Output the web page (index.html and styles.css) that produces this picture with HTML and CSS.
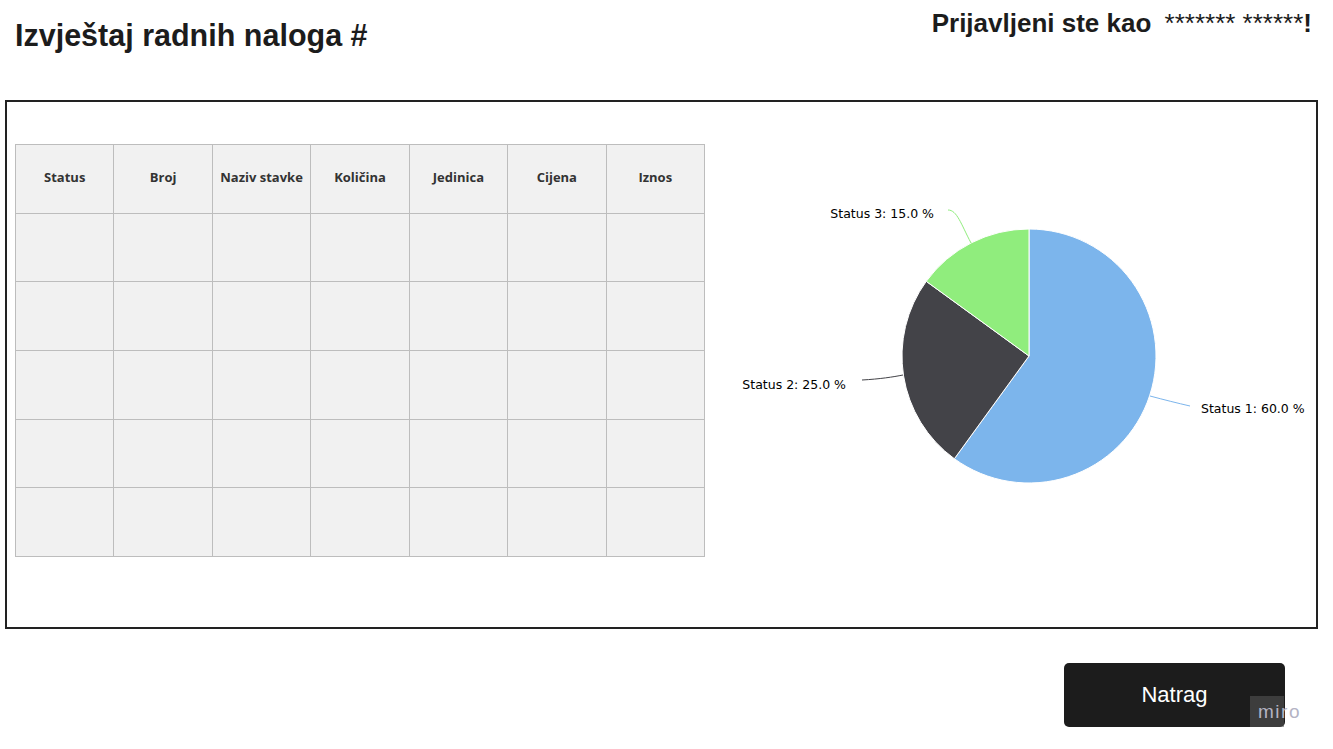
FILE: index.html
```html
<!DOCTYPE html>
<html lang="hr">
<head>
<meta charset="utf-8">
<title>Izvještaj radnih naloga</title>
<link rel="stylesheet" href="styles.css">
</head>
<body>
<header class="top">
  <h1 class="title">Izvještaj radnih naloga #</h1>
  <div class="user">Prijavljeni ste kao <span class="stars">******* ******</span>!</div>
</header>
<main class="panel">
  <table class="grid">
    <thead>
      <tr><th>Status</th><th>Broj</th><th>Naziv stavke</th><th>Količina</th><th>Jedinica</th><th>Cijena</th><th>Iznos</th></tr>
    </thead>
    <tbody>
      <tr><td></td><td></td><td></td><td></td><td></td><td></td><td></td></tr>
      <tr><td></td><td></td><td></td><td></td><td></td><td></td><td></td></tr>
      <tr><td></td><td></td><td></td><td></td><td></td><td></td><td></td></tr>
      <tr><td></td><td></td><td></td><td></td><td></td><td></td><td></td></tr>
      <tr><td></td><td></td><td></td><td></td><td></td><td></td><td></td></tr>
    </tbody>
  </table>
  <svg class="chart" width="611" height="440" viewBox="0 0 611 440">
    <path d="M324,212 L324,85 A127,127 0 1 1 249.35,314.75 Z" fill="#7cb5ec" stroke="#fff" stroke-width="1"/>
    <path d="M324,212 L249.35,314.75 A127,127 0 0 1 221.25,137.35 Z" fill="#434348" stroke="#fff" stroke-width="1"/>
    <path d="M324,212 L221.25,137.35 A127,127 0 0 1 324,85 Z" fill="#90ed7d" stroke="#fff" stroke-width="1"/>
    <path d="M445,252 C460,256 472,259 485,262" fill="none" stroke="#7cb5ec" stroke-width="1"/>
    <path d="M157,236 C175,235 188,233 198,231" fill="none" stroke="#434348" stroke-width="1"/>
    <path d="M243,66 C252,66 256,80 266,99" fill="none" stroke="#90ed7d" stroke-width="1"/>
    <text class="lbl" x="496" y="269">Status 1: 60.0 %</text>
    <text class="lbl" x="141" y="245" text-anchor="end">Status 2: 25.0 %</text>
    <text class="lbl" x="229" y="74" text-anchor="end">Status 3: 15.0 %</text>
  </svg>
</main>
<footer class="bottom">
  <button class="back">Natrag</button>
</footer>
<div class="miro"><span>miro</span></div>
</body>
</html>
```
FILE: styles.css
```css
html, body {
  margin: 0;
  padding: 0;
  background: #fff;
}
body {
  font-family: "Liberation Sans", Arial, sans-serif;
  color: #1c1c1c;
  width: 1333px;
  height: 749px;
  overflow: hidden;
  position: relative;
}
.top {
  display: flex;
  justify-content: space-between;
  align-items: flex-start;
  height: 100px;
  padding: 0 21px 0 15px;
  box-sizing: border-box;
}
.title {
  margin: 17px 0 0 0;
  font-size: 30.5px;
  font-weight: bold;
  line-height: 36px;
}
.user {
  margin-top: 7px;
  font-size: 26px;
  font-weight: bold;
  line-height: 32px;
}
.stars {
  font-weight: normal;
  margin-left: 6px;
}
.panel {
  margin-left: 5px;
  width: 1313px;
  height: 529px;
  box-sizing: border-box;
  border: 2px solid #222;
  padding: 42px 0 0 8px;
  display: flex;
  align-items: flex-start;
}
.grid {
  width: 690px;
  border-collapse: collapse;
  table-layout: fixed;
  border: 1px solid #999;
  background: #f1f1f1;
  flex: none;
}
.grid th, .grid td {
  border: 1px solid #bdbdbd;
  padding: 0;
  height: 67.67px;
}
.grid th {
  font-family: "Open Sans", sans-serif;
  font-weight: bold;
  font-size: 13px;
  color: #333;
  text-align: center;
  padding-bottom: 3px;
  height: 64.67px;
}
.chart {
  flex: none;
  display: block;
}
.lbl {
  font-family: "DejaVu Sans", sans-serif;
  font-size: 12.5px;
  fill: #000;
}
.bottom {
  display: flex;
  justify-content: flex-end;
  padding: 34px 48px 0 0;
}
.back {
  width: 221px;
  height: 64px;
  background: #1c1c1c;
  color: #fff;
  border: none;
  border-radius: 5px;
  font-family: "Liberation Sans", Arial, sans-serif;
  font-size: 22px;
}
.miro {
  position: absolute;
  left: 1250px;
  top: 696px;
  width: 34px;
  height: 31px;
  background: rgba(90, 90, 90, 0.55);
}
.miro span {
  position: absolute;
  left: 8px;
  top: 5px;
  font-family: "Liberation Sans", Arial, sans-serif;
  font-size: 19px;
  color: #b4b4c4;
  letter-spacing: 1.5px;
}
```
